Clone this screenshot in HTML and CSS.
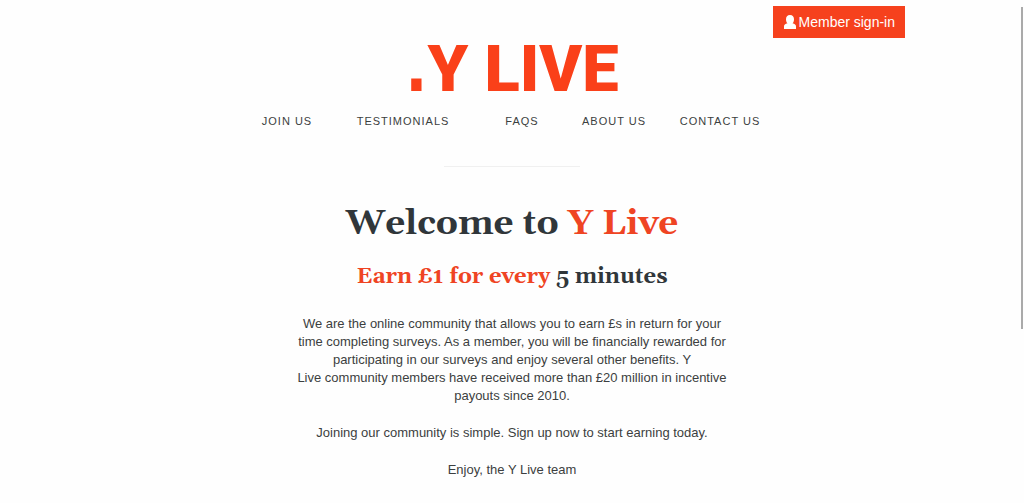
FILE: index.html
```html
<!DOCTYPE html>
<html lang="en">
<head>
<meta charset="utf-8">
<meta name="viewport" content="width=device-width, initial-scale=1">
<title>Y Live</title>
<link rel="stylesheet" href="styles.css">
</head>
<body>
<header class="header">
  <div class="account">
    <a class="sign-in" href="#sign-in">
      <svg class="user-icon" viewBox="0 0 12 14" aria-hidden="true"><path d="M6 0C3.300 0 2 1.800 2 4.200c0 2 .6 3.300 1.500 4.100C1.200 8.900 0 9.700 0 11.500V14h12v-2.500c0-1.800-1.200-2.600-3.500-3.200C9.400 7.500 10 6.200 10 4.200 10 1.800 8.700 0 6 0z"/></svg>
      <span>Member sign-in</span>
    </a>
  </div>
  <a class="logo" href="#home"><span class="logo-dot">.</span>Y LIVE</a>
  <nav class="nav" aria-label="Main">
    <a href="#join">JOIN US</a>
    <a href="#testimonials">TESTIMONIALS</a>
    <a href="#faqs">FAQS</a>
    <a href="#about">ABOUT US</a>
    <a href="#contact">CONTACT US</a>
  </nav>
</header>
<main class="main">
  <hr class="divider">
  <h1 class="title">Welcome to <span class="accent">Y Live</span></h1>
  <h2 class="subtitle"><span class="accent">Earn £1 for every</span> 5 minutes</h2>
  <div class="intro">
    <p>We are the online community that allows you to earn £s in return for your time completing surveys. As a member, you will be financially rewarded for participating in our surveys and enjoy several other benefits. Y Live&nbsp;community members have received more than £20 million in incentive payouts since 2010.</p>
    <p>Joining our community is simple. Sign up now to start earning today.</p>
    <p>Enjoy, the Y Live team</p>
  </div>
</main>
<div class="scroll-thumb" aria-hidden="true"></div>
</body>
</html>
```
FILE: styles.css
```css
* { box-sizing: border-box; }
body {
  margin: 0;
  background: #fefefe;
  color: #3c3f40;
  font-family: "Liberation Sans", Arial, sans-serif;
  overflow: hidden;
}
a { color: inherit; text-decoration: none; }
.header {
  display: flex;
  flex-direction: column;
  align-items: center;
  padding-top: 6px;
}
.account {
  display: flex;
  justify-content: flex-end;
  width: 100%;
  max-width: 786px;
}
.sign-in {
  display: flex;
  align-items: center;
  gap: 3px;
  height: 32px;
  padding: 0 10px 0 11px;
  background: #f6411d;
  color: #fff;
  font-size: 14px;
}
.user-icon { width: 12px; height: 14px; fill: currentColor; }
.logo {
  display: flex;
  align-items: baseline;
  color: #fa4019;
  font: 900 65px/46px Roboto, sans-serif;
  margin-top: 8px;
}
.logo-dot { font-family: "DejaVu Sans Condensed", "DejaVu Sans", sans-serif; }
.nav {
  display: grid;
  grid-template-columns: 60fr 172fr 66fr 118fr 94fr;
  text-align: center;
  width: 100%;
  max-width: 510px;
  margin-top: 22px;
  font-size: 11px;
  line-height: 14px;
  letter-spacing: 1px;
  white-space: nowrap;
}
.main {
  display: flex;
  flex-direction: column;
  align-items: center;
  text-align: center;
}
.divider {
  width: 136px;
  margin: 38px 0 32px;
  border: 0;
  border-top: 1px solid #f0f0f0;
}
.title, .subtitle {
  margin: 0;
  color: #30363a;
  font-family: Georgia, Gelasio, "Liberation Serif", serif;
  font-weight: 700;
}
.title { font-size: 35px; line-height: 50px; }
.subtitle { margin-top: 12px; font-size: 22px; line-height: 32px; }
.accent { color: #ef4423; }
.intro {
  width: 100%;
  max-width: 432px;
  margin-top: 22px;
  font-size: 13px;
  line-height: 18px;
}
.intro p { margin: 0 0 19px; }
.scroll-thumb {
  position: absolute;
  top: 7px;
  right: 1px;
  width: 2px;
  height: 64vh;
  background: #aaa;
}
```
